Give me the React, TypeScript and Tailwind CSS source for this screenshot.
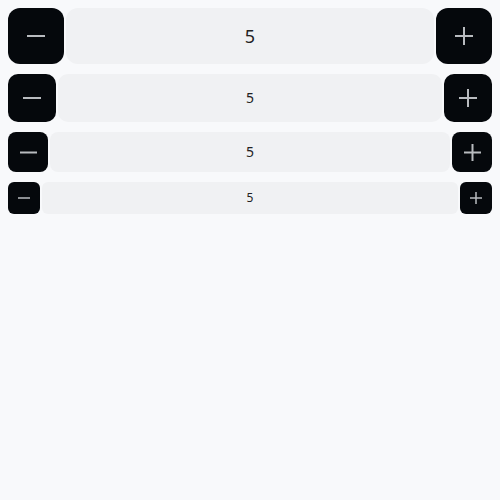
import React from "react";

function Minus({ s, w = 2 }: { s: number; w?: number }) {
  return (
    <svg width={s} height={s} viewBox={`0 0 ${s} ${s}`} fill="none">
      <line x1={0} y1={s / 2} x2={s} y2={s / 2} stroke="#b8bbbf" strokeWidth={w} />
    </svg>
  );
}
function Plus({ s, w = 2 }: { s: number; w?: number }) {
  return (
    <svg width={s} height={s} viewBox={`0 0 ${s} ${s}`} fill="none">
      <line x1={0} y1={s / 2} x2={s} y2={s / 2} stroke="#b8bbbf" strokeWidth={w} />
      <line x1={s / 2} y1={0} x2={s / 2} y2={s} stroke="#b8bbbf" strokeWidth={w} />
    </svg>
  );
}

export default function App() {
  return (
    <div className="min-h-[500px] w-full bg-[#f8f9fb] p-2 flex flex-col gap-2.5" style={{ fontFamily: '"Noto Sans", sans-serif' }}>
      <div className="flex gap-0.5 h-14">
        <button className="w-14 h-14 rounded-xl bg-[#05080c] flex items-center justify-center"><Minus s={18} /></button>
        <div className="flex-1 rounded-xl bg-[#f0f1f3] flex items-center justify-center text-lg text-[#222]">5</div>
        <button className="w-14 h-14 rounded-xl bg-[#05080c] flex items-center justify-center"><Plus s={18} /></button>
      </div>
      <div className="flex gap-0.5 h-12">
        <button className="w-12 h-12 rounded-[10px] bg-[#05080c] flex items-center justify-center"><Minus s={18} /></button>
        <div className="flex-1 rounded-[10px] bg-[#f0f1f3] flex items-center justify-center text-sm text-[#222]">5</div>
        <button className="w-12 h-12 rounded-[10px] bg-[#05080c] flex items-center justify-center"><Plus s={18} /></button>
      </div>
      <div className="flex gap-0.5 h-10">
        <button className="w-10 h-10 rounded-lg bg-[#05080c] flex items-center justify-center"><Minus s={17} /></button>
        <div className="flex-1 rounded-lg bg-[#f0f1f3] flex items-center justify-center text-sm text-[#222]">5</div>
        <button className="w-10 h-10 rounded-lg bg-[#05080c] flex items-center justify-center"><Plus s={17} /></button>
      </div>
      <div className="flex gap-0.5 h-8">
        <button className="w-8 h-8 rounded-md bg-[#05080c] flex items-center justify-center"><Minus s={12} w={1.5} /></button>
        <div className="flex-1 rounded-md bg-[#f0f1f3] flex items-center justify-center text-xs text-[#222]">5</div>
        <button className="w-8 h-8 rounded-md bg-[#05080c] flex items-center justify-center"><Plus s={12} w={1.5} /></button>
      </div>
    </div>
  );
}
